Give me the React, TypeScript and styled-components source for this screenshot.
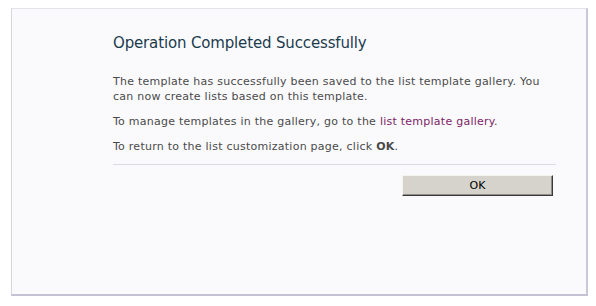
import React from 'react';
import styled, { createGlobalStyle } from 'styled-components';

const GlobalStyle = createGlobalStyle`
  html, body {
    margin: 0;
    padding: 0;
    background: #ffffff;
  }
  body {
    font-family: "DejaVu Sans", Verdana, sans-serif;
  }
`;

const Page = styled.div`
  padding: 8px 0 0 11px;
  width: 596px;
  height: 306px;
  box-sizing: border-box;
`;

const Panel = styled.div`
  width: 577px;
  height: 288px;
  box-sizing: border-box;
  background: #fafafd;
  border-top: 1px solid #e3e3ea;
  border-left: 1px solid #d6d5de;
  border-right: 2px solid #c9c8d6;
  border-bottom: 2px solid #c4c3d3;
  padding: 24px 30px 0 101px;
`;

const Title = styled.h1`
  margin: 0;
  font-size: 15px;
  font-weight: normal;
  letter-spacing: -0.15px;
  color: #1a3a4e;
  line-height: 20px;
`;

const Body = styled.div`
  margin-top: 21px;
  color: #4a4a4a;
  font-size: 11px;
  letter-spacing: 0.25px;
  line-height: 15px;
`;

const Para = styled.p`
  margin: 0 0 10px 0;
`;

const Link = styled.a`
  color: #7d1d66;
  text-decoration: none;
`;

const Divider = styled.div`
  height: 1px;
  background: #dcdce2;
  margin-top: 2px;
`;

const ButtonRow = styled.div`
  display: flex;
  justify-content: flex-end;
  padding: 10px 3px 0 0;
`;

const OkButton = styled.button`
  width: 151px;
  height: 21px;
  background: #d6d3cc;
  border: 1px solid;
  border-color: #f4f3ee #3a3a3a #3a3a3a #f4f3ee;
  box-shadow: inset -1px -1px 0 #8f8d86;
  font-family: "DejaVu Sans", Tahoma, sans-serif;
  font-size: 11px;
  color: #000;
  padding: 0;
`;

export default function App() {
  return (
    <>
      <GlobalStyle />
      <Page>
        <Panel>
          <Title>Operation Completed Successfully</Title>
          <Body>
            <Para>
              The template has successfully been saved to the list template gallery. You can now create lists based on this template.
            </Para>
            <Para>
              To manage templates in the gallery, go to the <Link href="#">list template gallery</Link>.
            </Para>
            <Para>
              To return to the list customization page, click <b>OK</b>.
            </Para>
          </Body>
          <Divider />
          <ButtonRow>
            <OkButton>OK</OkButton>
          </ButtonRow>
        </Panel>
      </Page>
    </>
  );
}
